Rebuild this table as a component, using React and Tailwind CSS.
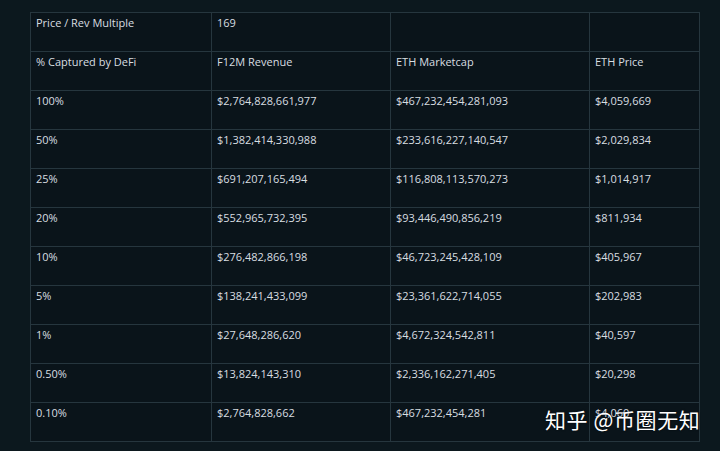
import React from "react";

const rows = [
  ["Price / Rev Multiple", "169", "", ""],
  ["% Captured by DeFi", "F12M Revenue", "ETH Marketcap", "ETH Price"],
  ["100%", "$2,764,828,661,977", "$467,232,454,281,093", "$4,059,669"],
  ["50%", "$1,382,414,330,988", "$233,616,227,140,547", "$2,029,834"],
  ["25%", "$691,207,165,494", "$116,808,113,570,273", "$1,014,917"],
  ["20%", "$552,965,732,395", "$93,446,490,856,219", "$811,934"],
  ["10%", "$276,482,866,198", "$46,723,245,428,109", "$405,967"],
  ["5%", "$138,241,433,099", "$23,361,622,714,055", "$202,983"],
  ["1%", "$27,648,286,620", "$4,672,324,542,811", "$40,597"],
  ["0.50%", "$13,824,143,310", "$2,336,162,271,405", "$20,298"],
  ["0.10%", "$2,764,828,662", "$467,232,454,281", "$4,060"],
];

const widths = ["w-[181px]", "w-[179px]", "w-[199px]", "w-[110px]"];

export default function App() {
  return (
    <div className="relative w-[720px] h-[451px] bg-[#0c181e] pt-[12px] pl-[30px] overflow-hidden" style={{ fontFamily: '"Open Sans", "Noto Sans", sans-serif' }}>
      <table className="border-collapse bg-[#0a141a] text-[11px] text-[#d8dee1]">
        <tbody>
          {rows.map((r, i) => (
            <tr key={i} className="h-[39px]">
              {r.map((c, j) => (
                <td key={j} className={`${widths[j]} border border-[#26363e] align-top px-[5px] pt-[2px] leading-[15px] whitespace-nowrap`}>
                  {c}
                </td>
              ))}
            </tr>
          ))}
        </tbody>
      </table>
      <div
        className="absolute left-[545px] top-[406px] text-[21px] leading-[27px] text-white tracking-[0.6px]"
        style={{ fontFamily: '"Noto Sans CJK SC", sans-serif', textShadow: "0 0 2px rgba(0,0,0,0.6)" }}
      >
        知乎 @币圈无知
      </div>
    </div>
  );
}
